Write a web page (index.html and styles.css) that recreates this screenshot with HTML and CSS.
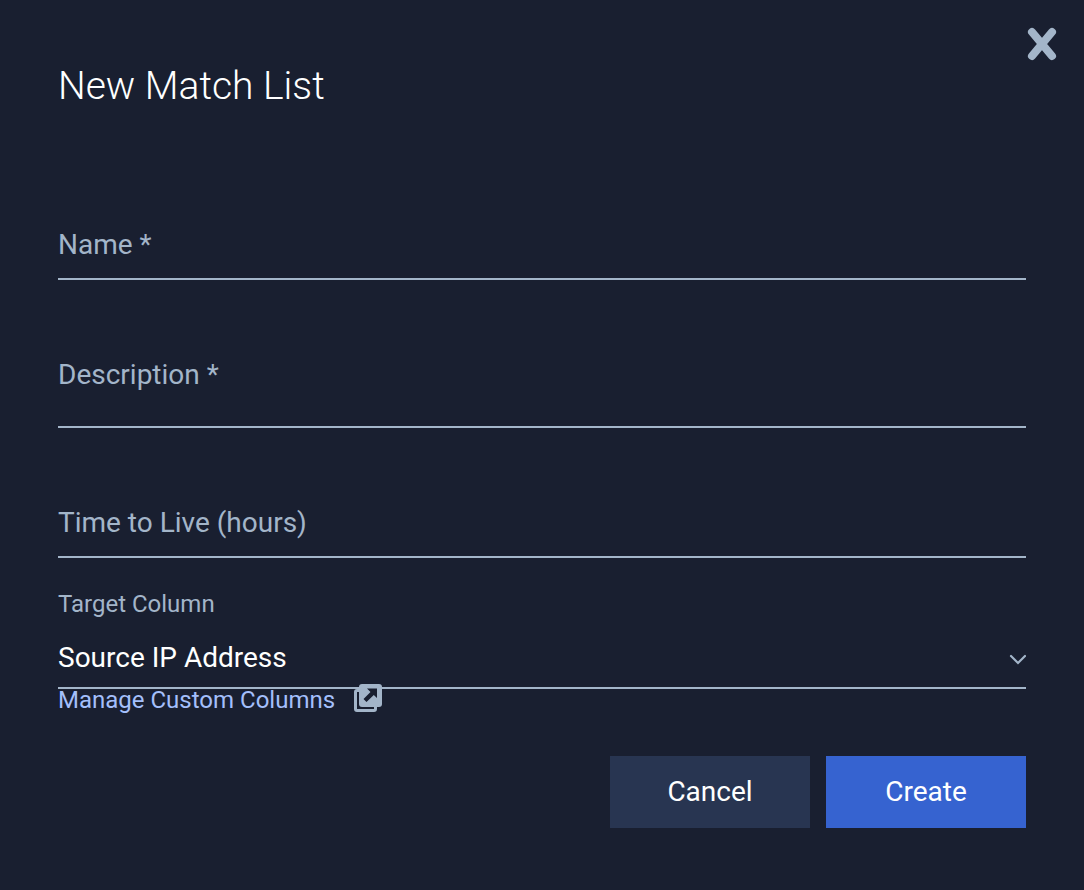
FILE: index.html
```
<!DOCTYPE html>
<html lang="en">
<head>
<meta charset="utf-8">
<meta name="viewport" content="width=device-width, initial-scale=1">
<title>New Match List</title>
<link rel="stylesheet" href="styles.css">
</head>
<body>
<main class="dialog" role="dialog" aria-labelledby="dialog-title">
  <button class="close" type="button" aria-label="Close">
    <svg viewBox="0 0 32 36" width="32" height="36" aria-hidden="true"><path d="M6 6 26 30M26 6 6 30" fill="none" stroke="currentColor" stroke-width="8" stroke-linecap="round"/></svg>
  </button>
  <h1 class="title" id="dialog-title">New Match List</h1>
  <form class="form">
    <div class="field">
      <label class="label" for="name">Name *</label>
      <input class="control" id="name" type="text" required>
    </div>
    <div class="field field-tall">
      <label class="label" for="description">Description *</label>
      <textarea class="control" id="description" rows="1" required></textarea>
    </div>
    <div class="field">
      <label class="label" for="ttl">Time to Live (hours)</label>
      <input class="control" id="ttl" type="text" inputmode="numeric">
    </div>
    <div class="select-field">
      <label class="small-label" for="column">Target Column</label>
      <div class="select-box">
        <select class="select" id="column"><option>Source IP Address</option></select>
        <svg class="chevron" viewBox="0 0 18 18" width="18" height="18" aria-hidden="true"><path d="m3 7 7 7 7-7" fill="none" stroke="currentColor" stroke-width="2.200" stroke-linecap="round"/></svg>
      </div>
    </div>
    <a class="manage" href="#">
      <span>Manage Custom Columns</span>
      <svg class="external" viewBox="0 0 28 28" width="28" height="28" aria-hidden="true">
        <path d="M5 5H3Q0 5 0 8V25Q0 28 3 28H20Q23 28 23 25V23H20V25H3V8H5Z" fill="currentColor"/>
        <rect x="5" width="23" height="23" rx="3" fill="currentColor"/>
        <path d="M13 4.500H23V14L19.800 11 12.500 18 9.500 15 16.500 8Z" class="external-arrow"/>
      </svg>
    </a>
    <div class="actions">
      <button class="button" type="button">Cancel</button>
      <button class="button button-primary" type="submit">Create</button>
    </div>
  </form>
</main>
</body>
</html>
```
FILE: styles.css
```
* { box-sizing: border-box; }
body {
  margin: 0;
  background: #191f30;
  color: #fff;
  font-family: Roboto, "Liberation Sans", sans-serif;
  font-size: 28px;
  line-height: 36px;
}
.dialog {
  position: relative;
  min-height: 100vh;
  padding: 62px 58px;
}
.close {
  position: absolute;
  top: 26px;
  right: 26px;
  display: flex;
  padding: 0;
  border: 0;
  background: none;
  color: #a3b5c9;
  cursor: pointer;
}
.title {
  margin: 0 0 100px;
  font-size: 39px;
  font-weight: 300;
  line-height: 48px;
}
.form {
  display: flex;
  flex-direction: column;
}
.field {
  display: grid;
  margin-bottom: 60px;
}
.label {
  grid-area: 1 / 1;
  padding-top: 17px;
  color: #a3b5c9;
  pointer-events: none;
}
.control {
  grid-area: 1 / 1;
  width: 100%;
  height: 70px;
  padding: 16px 0;
  border: 0;
  border-bottom: 2px solid #a3b5c9;
  border-radius: 0;
  outline: 0;
  background: transparent;
  color: #fff;
  font: inherit;
  resize: none;
}
.field-tall .control { height: 88px; }
.select-field {
  margin-top: -30px;
  border-bottom: 2px solid #a3b5c9;
}
.small-label {
  display: block;
  color: #a3b5c9;
  font-size: 24px;
  line-height: 32px;
}
.select-box {
  display: grid;
  align-items: center;
  padding: 20px 0 11px;
}
.select {
  grid-area: 1 / 1;
  width: 100%;
  height: 36px;
  margin: 0;
  padding: 0;
  border: 0;
  outline: 0;
  appearance: none;
  background: transparent;
  color: #fff;
  font: inherit;
}
.chevron {
  grid-area: 1 / 1;
  justify-self: end;
  color: #a3b5c9;
  pointer-events: none;
}
.manage {
  display: flex;
  align-items: flex-start;
  align-self: flex-start;
  gap: 19px;
  margin-top: -5px;
  color: #a4bffb;
  font-size: 24px;
  line-height: 32px;
  text-decoration: none;
}
.external {
  color: #a3b5c9;
}
.external-arrow { fill: #191f30; }
.actions {
  display: flex;
  justify-content: flex-end;
  gap: 16px;
  margin-top: 40px;
}
.button {
  width: 200px;
  height: 72px;
  border: 0;
  background: #283551;
  color: #fff;
  font: inherit;
  cursor: pointer;
}
.button-primary { background: #3663d0; }
```
